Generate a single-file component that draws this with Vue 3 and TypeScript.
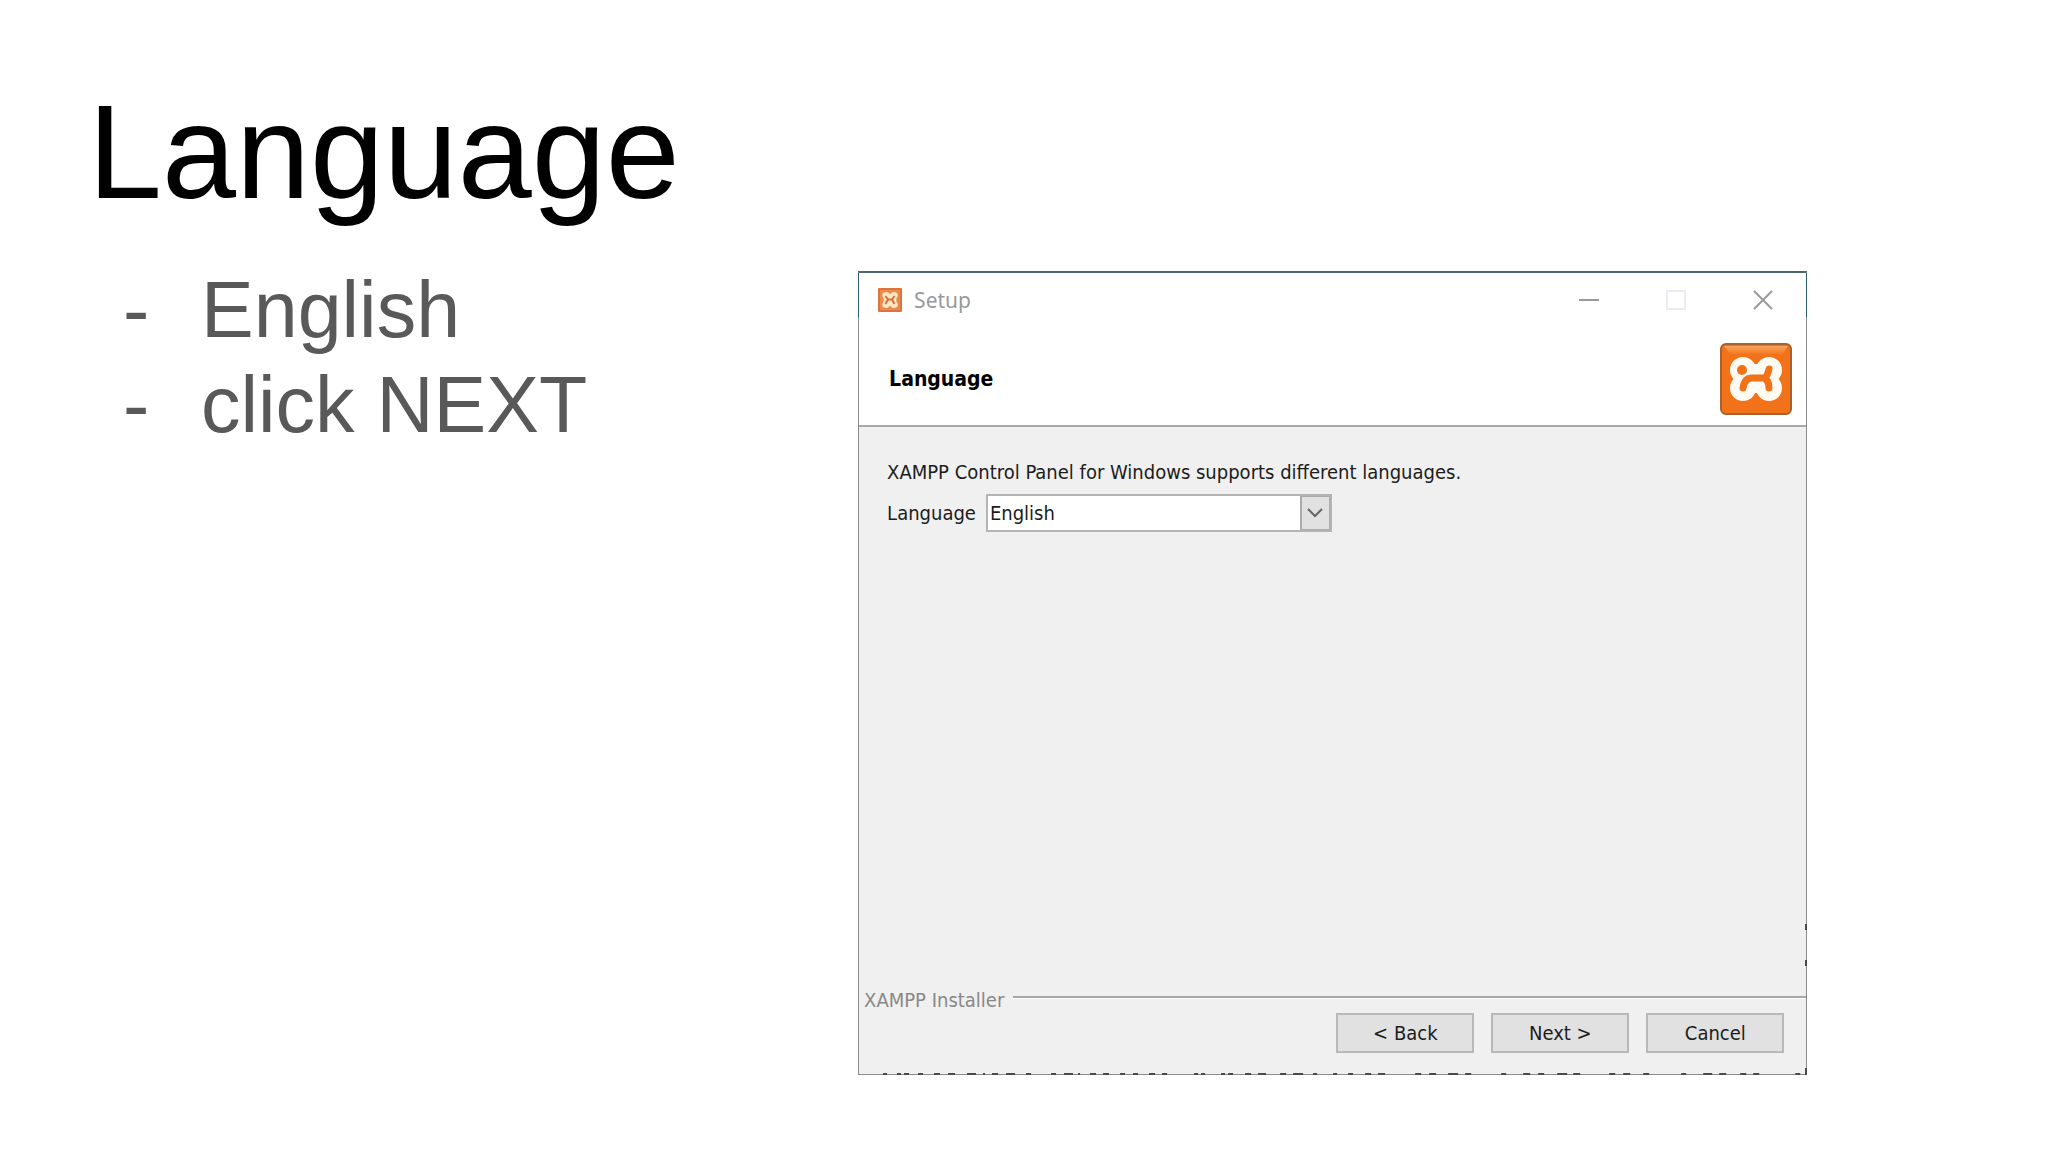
<script setup lang="ts">
import { ref } from 'vue'

interface Mark {
  start: number
  length: number
}

const language = ref('English')
const steps: string[] = ['English', 'click NEXT']

// Dark specks of the window behind, showing along the dialog's lower edge.
const edgeMarks: Mark[] = (
  [
    [25, 4], [39, 4], [46, 5], [60, 5], [76, 6], [90, 7], [109, 9], [125, 2], [134, 6], [148, 9],
    [168, 5], [193, 5], [206, 9], [220, 2], [232, 6], [245, 6], [262, 5], [275, 5], [291, 6], [304, 5],
    [336, 4], [343, 4], [363, 4], [370, 5], [387, 6], [400, 8], [422, 6], [435, 10], [455, 4], [475, 4],
    [490, 5], [507, 6], [520, 7], [557, 6], [571, 7], [590, 10], [607, 6], [643, 5], [665, 7], [680, 6],
    [699, 10], [715, 7], [751, 6], [765, 7], [785, 6], [823, 5], [845, 9], [861, 7], [882, 6], [895, 6],
    [937, 5],
  ] as [number, number][]
).map(([start, length]) => ({ start, length }))

const sideMarks: Mark[] = [
  { start: 652, length: 6 },
  { start: 688, length: 6 },
  { start: 796, length: 7 },
]
</script>

<template>
  <main class="slide">
    <h1>Language</h1>
    <div class="content">
      <ul class="steps">
        <li v-for="step in steps" :key="step">{{ step }}</li>
      </ul>
      <section class="dialog" aria-label="Setup">
        <header class="titlebar">
          <svg class="app-icon" viewBox="0 0 24 24" aria-hidden="true">
            <rect width="24" height="24" rx="1" fill="#dd7440" />
            <rect x="2" y="2" width="20" height="20" fill="#ec8a4c" />
            <path
              d="M8 4C11 4 11 6 12 6S13 4 16 4C19 4 21 7 19 9.500C18 11 18 13 19 14.500C21 17 19 20 16 20C13 20 13 18 12 18S11 20 8 20C5 20 3 17 5 14.500C6 13 6 11 5 9.500C3 7 5 4 8 4Z"
              fill="#ffe6c4"
            />
            <path d="M7.500 8L10 11.500H14L16.500 8M10 11.500L7.500 16M14 11.500L16.500 16" fill="none" stroke="#d9703c" stroke-width="2" />
          </svg>
          <span class="caption">Setup</span>
          <div class="window-buttons">
            <button type="button" aria-label="Minimize">
              <svg viewBox="0 0 20 20"><path d="M0 10H20" stroke="#999" stroke-width="2" /></svg>
            </button>
            <button type="button" aria-label="Maximize" disabled>
              <svg viewBox="0 0 20 20"><path d="M1 1H19V19H1Z" fill="none" stroke="#ebebf1" stroke-width="2" /></svg>
            </button>
            <button type="button" aria-label="Close">
              <svg viewBox="0 0 20 20"><path d="M1 1L19 19M19 1L1 19" stroke="#999" stroke-width="2" /></svg>
            </button>
          </div>
        </header>
        <div class="banner">
          <h2>Language</h2>
          <svg class="logo" viewBox="0 0 72 72" aria-hidden="true">
            <defs>
              <linearGradient id="shine" x1="0" y1="0" x2="0" y2="1">
                <stop offset="0" stop-color="#f9a25c" />
                <stop offset="1" stop-color="#f37a22" />
              </linearGradient>
            </defs>
            <rect x="1" y="1" width="70" height="70" rx="5" fill="#f17218" stroke="#a9602c" stroke-width="2" />
            <path d="M4 3H68L63 11H10Z" fill="url(#shine)" />
            <g fill="#fffaf2">
              <circle cx="23" cy="27" r="13" />
              <circle cx="49" cy="27" r="13" />
              <circle cx="23" cy="45" r="13" />
              <circle cx="49" cy="45" r="13" />
              <rect x="24" y="21" width="24" height="29" />
            </g>
            <path d="M32 13H40L36 19ZM32 58L36 52L40 58Z" fill="#f17218" />
            <circle cx="22" cy="27" r="5" fill="#f17218" />
            <path
              d="M23 45C24 38 27 35 32 35H44C47 34 48 30 49 26M44 35C48 37 49 40 49 45"
              fill="none"
              stroke="#f17218"
              stroke-width="7"
              stroke-linecap="round"
            />
          </svg>
        </div>
        <div class="body">
          <p>XAMPP Control Panel for Windows supports different languages.</p>
          <div class="field">
            <label for="language">Language</label>
            <div class="combo">
              <select id="language" v-model="language">
                <option>English</option>
              </select>
              <span class="arrow" aria-hidden="true">
                <svg viewBox="0 0 16 10"><path d="M1 1L8 8L15 1" fill="none" stroke="#666" stroke-width="2" /></svg>
              </span>
            </div>
          </div>
        </div>
        <footer>
          <div class="brand"><span>XAMPP Installer</span></div>
          <div class="actions">
            <button type="button">&lt; Back</button>
            <button type="button">Next &gt;</button>
            <button type="button">Cancel</button>
          </div>
        </footer>
        <svg class="edge bottom" viewBox="0 0 949 2" preserveAspectRatio="none" aria-hidden="true">
          <rect v-for="m in edgeMarks" :key="m.start" :x="m.start" y="0" :width="m.length" height="2" />
        </svg>
        <svg class="edge side" viewBox="0 0 2 803" preserveAspectRatio="none" aria-hidden="true">
          <rect v-for="m in sideMarks" :key="m.start" x="0" :y="m.start" width="2" :height="m.length" />
        </svg>
      </section>
    </div>
  </main>
</template>

<style>
body {
  margin: 0;
  background: #fff;
}
</style>

<style scoped>
.slide {
  padding-top: 72px;
  font-family: "Liberation Sans", Arial, sans-serif;
}

h1 {
  margin: 0;
  padding-left: 88px;
  font-size: 133px;
  line-height: 160px;
  font-weight: 400;
  color: #000;
}

.content {
  display: grid;
  grid-template-columns: 41.9% 46.35%;
  align-items: start;
  padding-top: 30px;
}

.steps {
  margin: 0;
  padding: 0 0 0 123px;
  list-style: none;
  font-size: 79px;
  line-height: 95px;
  color: #595959;
}

.steps li {
  display: flex;
}

.steps li::before {
  content: "-";
  width: 78px;
}

.dialog {
  position: relative;
  margin-top: 9px;
  border: 1px solid #8c8c8c;
  border-top: 2px solid #4c6672;
  background: #f0f0f0;
  color: #1c1c1c;
  font-family: "DejaVu Sans Condensed", "DejaVu Sans", sans-serif;
  font-size: 20px;
  line-height: 24px;
}

.titlebar {
  position: relative;
  display: flex;
  align-items: center;
  height: 54px;
  background: #fff;
}

.titlebar::before {
  content: "";
  position: absolute;
  inset: 0 -1px 10px;
  border: solid #2f5c6c;
  border-width: 0 1px;
  pointer-events: none;
}

.app-icon {
  width: 24px;
  height: 24px;
  margin-left: 19px;
}

.caption {
  margin-left: 12px;
  color: #999;
  font-family: "Noto Sans", "Open Sans", sans-serif;
  font-size: 21px;
}

.window-buttons {
  display: flex;
  margin-left: auto;
}

.window-buttons button {
  display: grid;
  place-items: center;
  width: 87px;
  height: 54px;
  padding: 0;
  border: 0;
  background: none;
}

.window-buttons svg {
  width: 20px;
  height: 20px;
}

.banner {
  display: flex;
  align-items: center;
  justify-content: space-between;
  padding: 16px 14px 10px 30px;
  border-bottom: 2px solid #a8a8a8;
  background: #fff;
}

h2 {
  margin: 0;
  color: #000;
  font-size: 21px;
  line-height: 24px;
  font-weight: 700;
}

.logo {
  width: 72px;
  height: 72px;
}

.body {
  box-sizing: border-box;
  min-height: 561px;
  padding: 33px 28px;
}

p {
  margin: 0 0 10px;
}

.field {
  display: flex;
  align-items: center;
  gap: 10px;
}

.combo {
  display: grid;
  box-sizing: border-box;
  width: 346px;
  height: 38px;
  border: 2px solid #b4b4b4;
  background: #fff;
}

.combo select {
  grid-area: 1 / 1;
  width: 100%;
  padding: 0 32px 0 2px;
  border: 0;
  appearance: none;
  background: none;
  color: inherit;
  font: inherit;
}

.arrow {
  grid-area: 1 / 1;
  justify-self: end;
  display: grid;
  place-items: center;
  width: 27px;
  border: 1px solid #ababab;
  border-left-width: 2px;
  background: #e1e1e1;
  pointer-events: none;
}

.arrow svg {
  width: 16px;
  height: 10px;
}

.brand {
  display: flex;
  gap: 9px;
  padding-left: 5px;
  color: #888;
}

.brand::after {
  content: "";
  flex: 1;
  height: 2px;
  margin-top: 8px;
  border-bottom: 1px solid #fff;
  background: #a8a8a8;
}

.actions {
  display: flex;
  justify-content: flex-end;
  gap: 17px;
  padding: 1px 22px 21px;
}

.actions button {
  width: 138px;
  height: 40px;
  padding: 0;
  border: 2px solid #b8b8b8;
  background: #e1e1e1;
  color: inherit;
  font: inherit;
}

.edge {
  position: absolute;
  fill: #4a4a4a;
  pointer-events: none;
}

.bottom {
  left: -1px;
  bottom: -1px;
  width: calc(100% + 2px);
  height: 2px;
}

.side {
  top: -1px;
  right: -1px;
  width: 2px;
  height: calc(100% + 2px);
}
</style>
